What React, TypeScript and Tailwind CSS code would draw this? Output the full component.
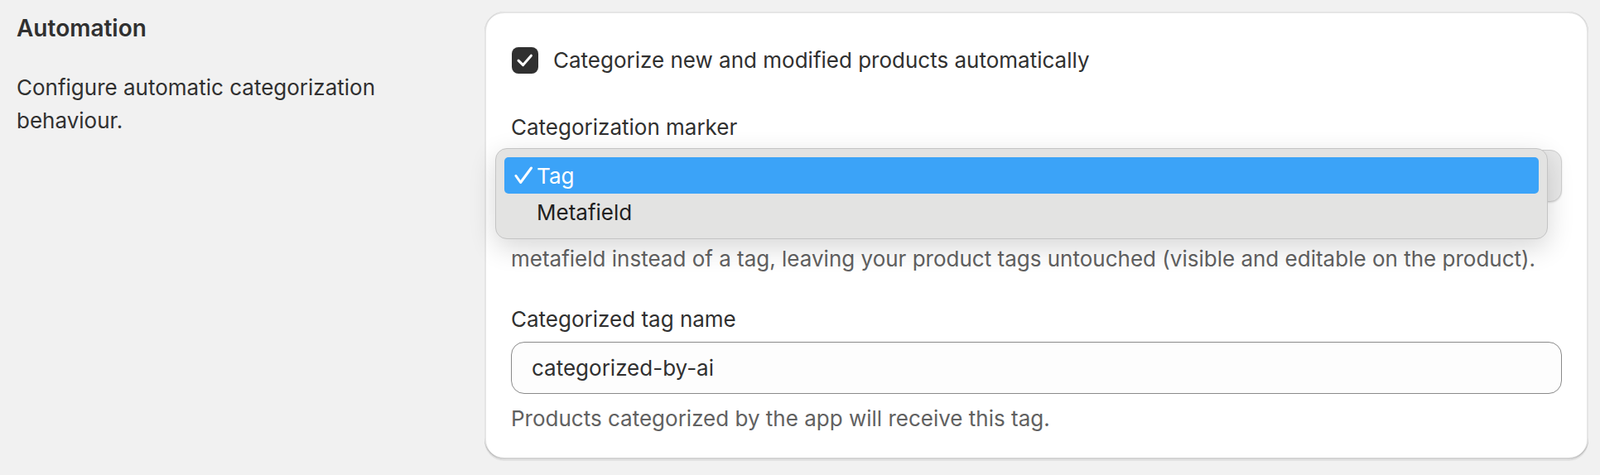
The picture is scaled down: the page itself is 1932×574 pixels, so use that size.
import { useState } from "react";

const font = { fontFamily: "Inter, 'Noto Sans', sans-serif" };

function CheckIcon() {
  return (
    <svg width="32" height="32" viewBox="0 0 32 32" fill="none">
      <path
        d="M8 16.2 L13.6 21.6 L23.4 10.2"
        stroke="white"
        strokeWidth="3"
        strokeLinecap="round"
        strokeLinejoin="round"
      />
    </svg>
  );
}

function MarkerSelect() {
  const options = ["Tag", "Metafield"];
  const [value, setValue] = useState("Tag");

  return (
    <div className="relative mt-[7px] h-[63px]">
      {/* the closed select behind the open native menu */}
      <div className="h-full rounded-[14px] border border-[#cfcfcf] bg-[#e9e9e9] shadow-[0_1px_2px_rgba(0,0,0,0.12)]" />

      <div className="absolute left-[-19px] right-[17px] top-[-2px] z-10 rounded-[14px] border border-[#c4c4c4] bg-[#e3e3e2] px-[10px] py-[10px] shadow-[0_10px_32px_rgba(0,0,0,0.16)]">
        {options.map((o) => {
          const active = o === value;
          return (
            <button
              key={o}
              type="button"
              onClick={() => setValue(o)}
              className={`flex h-[44px] w-full items-center rounded-[5px] text-left text-[26px] ${
                active ? "bg-[#3ba3f8] text-white" : "text-[#1f1f1f]"
              }`}
            >
              <span className="flex w-[39px] justify-end pr-[5px]">
                {active && (
                  <svg width="22" height="22" viewBox="0 0 22 22" fill="none">
                    <path
                      d="M2 11.5 L7.6 19.5 L20.5 2"
                      stroke="white"
                      strokeWidth="3"
                      strokeLinecap="round"
                      strokeLinejoin="round"
                    />
                  </svg>
                )}
              </span>
              <span>{o}</span>
            </button>
          );
        })}
      </div>
    </div>
  );
}

export default function App() {
  const [auto, setAuto] = useState(true);
  const [tagName, setTagName] = useState("categorized-by-ai");

  return (
    <div
      className="flex min-h-[574px] bg-[#f1f1f1] pl-[20px] pr-[14px] pt-[14px] text-[#303030]"
      style={font}
    >
      <div className="w-[525px] shrink-0">
        <h2 className="text-[28px] font-semibold leading-[40px]">Automation</h2>
        <p className="mt-[32px] w-[470px] text-[26px] leading-[40px]">
          Configure automatic categorization behaviour.
        </p>
      </div>

      <div className="ml-[40px] h-[541px] flex-1 rounded-[24px] bg-white px-[32px] pb-[29px] pt-[39px] shadow-[0_2px_0_0_rgba(26,26,26,0.07),inset_0_2px_0_0_rgba(204,204,204,0.5),inset_0_-2px_0_0_rgba(0,0,0,0.17),inset_2px_0_0_0_rgba(0,0,0,0.1),inset_-2px_0_0_0_rgba(0,0,0,0.1)]">
        <label className="flex h-[40px] cursor-pointer items-center">
          <button
            type="button"
            onClick={() => setAuto(!auto)}
            className={`ml-[1px] flex h-[32px] w-[32px] items-center justify-center rounded-[8px] ${
              auto ? "bg-[#303030]" : "border-2 border-[#8a8a8a] bg-white"
            }`}
          >
            {auto && <CheckIcon />}
          </button>
          <span className="ml-[18px] text-[26px] leading-[40px]">
            Categorize new and modified products automatically
          </span>
        </label>

        <div className="mt-[41px] text-[26px] leading-[40px]">Categorization marker</div>
        <MarkerSelect />
        <p className="mt-[9px] text-[26px] leading-[40px] text-[#616161]">
          Choose how categorized products are marked. The Metafield option stores it in a product
          <br />
          metafield instead of a tag, leaving your product tags untouched (visible and editable on the product).
        </p>

        <div className="mt-[33px] text-[26px] leading-[40px]">Categorized tag name</div>
        <input
          value={tagName}
          onChange={(e) => setTagName(e.target.value)}
          className="mt-[7px] block h-[63px] w-full rounded-[16px] border border-[#8a8a8a] bg-[#fdfdfd] px-[24px] text-[26px] text-[#303030] outline-none"
        />
        <p className="mt-[10px] text-[26px] leading-[40px] text-[#616161]">
          Products categorized by the app will receive this tag.
        </p>
      </div>
    </div>
  );
}
